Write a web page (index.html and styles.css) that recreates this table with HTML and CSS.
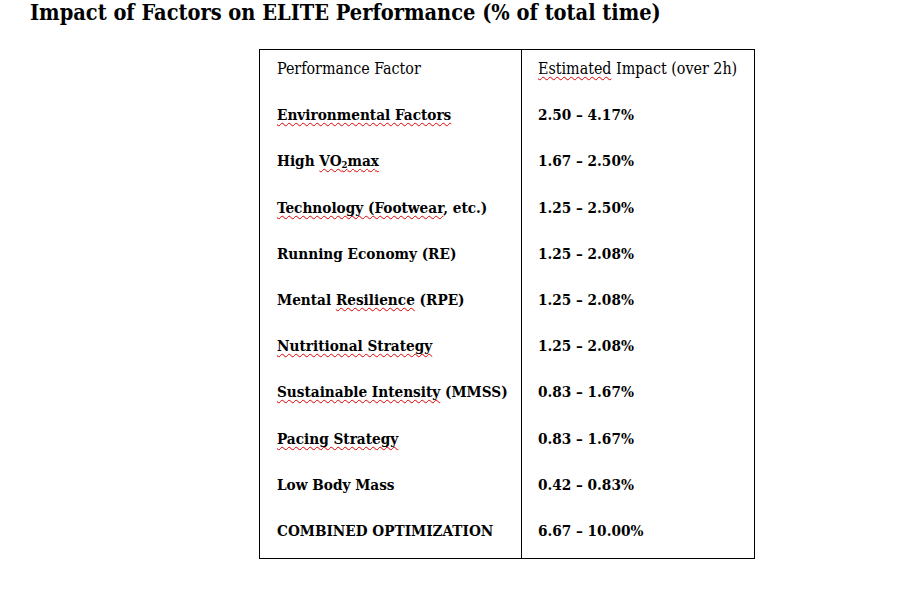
FILE: index.html
```html
<!DOCTYPE html>
<html>
<head>
<meta charset="utf-8">
<link rel="stylesheet" href="styles.css">
</head>
<body>
<h1 class="title">Impact of Factors on ELITE Performance (% of total time)</h1>
<div class="table">
  <div class="cell left head">Performance Factor</div>
  <div class="cell right head"><span class="sp">Estimated</span> Impact (over 2h)</div>

  <div class="cell left"><span class="sp">Environmental Factors</span></div>
  <div class="cell right">2.50 – 4.17%</div>

  <div class="cell left">High <span class="sp">VO<sub class="sub">2</sub>max</span></div>
  <div class="cell right">1.67 – 2.50%</div>

  <div class="cell left"><span class="sp">Technology (Footwear</span>, etc.)</div>
  <div class="cell right">1.25 – 2.50%</div>

  <div class="cell left">Running Economy (RE)</div>
  <div class="cell right">1.25 – 2.08%</div>

  <div class="cell left">Mental <span class="sp">Resilience</span> (RPE)</div>
  <div class="cell right">1.25 – 2.08%</div>

  <div class="cell left"><span class="sp">Nutritional Strategy</span></div>
  <div class="cell right">1.25 – 2.08%</div>

  <div class="cell left"><span class="sp">Sustainable Intensity</span> (MMSS)</div>
  <div class="cell right">0.83 – 1.67%</div>

  <div class="cell left"><span class="sp">Pacing Strategy</span></div>
  <div class="cell right">0.83 – 1.67%</div>

  <div class="cell left">Low Body Mass</div>
  <div class="cell right">0.42 – 0.83%</div>

  <div class="cell left">COMBINED OPTIMIZATION</div>
  <div class="cell right">6.67 – 10.00%</div>
</div>
</body>
</html>
```

FILE: styles.css
```css
html, body {
  margin: 0;
  padding: 0;
  background: #ffffff;
  color: #000000;
}
body {
  font-family: "DejaVu Serif", "Liberation Serif", serif;
  font-stretch: condensed;
}
.title {
  margin: 0;
  padding: 0 0 0 30px;
  height: 49px;
  font-size: 21.6px;
  line-height: 26px;
  font-weight: bold;
}
.table {
  margin-left: 259px;
  width: 496px;
  box-sizing: border-box;
  border: 1px solid #000;
  display: grid;
  grid-template-columns: 262px 232px;
  grid-auto-rows: 46.2px;
}
.cell {
  box-sizing: border-box;
  font-size: 15.2px;
  line-height: 20px;
  padding-top: 9px;
  font-weight: bold;
  white-space: nowrap;
}
.cell.head {
  font-weight: normal;
  font-size: 15.9px;
}
.left {
  border-right: 1px solid #000;
  padding-left: 17px;
}
.right {
  padding-left: 16px;
}
.sub {
  font-size: 0.62em;
  vertical-align: baseline;
  position: relative;
  top: 0.2em;
}
.sp {
  text-decoration: underline wavy #e00000;
  text-decoration-thickness: 1px;
  text-underline-offset: 2px;
  text-decoration-skip-ink: none;
}
```
